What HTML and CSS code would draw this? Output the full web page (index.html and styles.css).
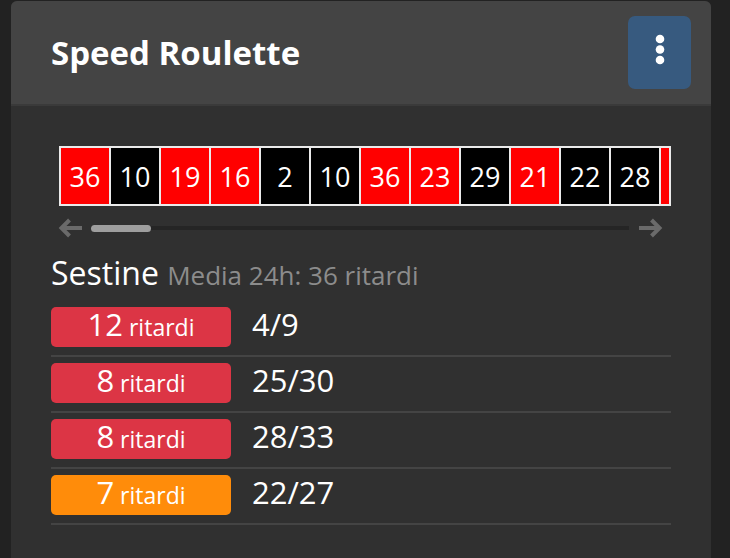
FILE: index.html
```html
<!DOCTYPE html>
<html lang="it">
<head>
<meta charset="UTF-8">
<meta name="viewport" content="width=device-width, initial-scale=1.0">
<title>Speed Roulette</title>
<link rel="stylesheet" href="styles.css">
</head>
<body>
  <div class="card">
    <div class="card-header">
      <h1 class="title">Speed Roulette</h1>
      <button class="menu-btn" type="button">
        <svg width="10" height="32" viewBox="0 0 10 32">
          <circle cx="5" cy="5" r="4.3" fill="#fff"/>
          <circle cx="5" cy="15.5" r="4.3" fill="#fff"/>
          <circle cx="5" cy="26" r="4.3" fill="#fff"/>
        </svg>
      </button>
    </div>

    <div class="card-body">
      <!-- ultime uscite -->
      <div class="spins-frame">
        <div class="spins">
          <div class="spin red">36</div>
          <div class="spin black">10</div>
          <div class="spin red">19</div>
          <div class="spin red">16</div>
          <div class="spin black">2</div>
          <div class="spin black">10</div>
          <div class="spin red">36</div>
          <div class="spin red">23</div>
          <div class="spin black">29</div>
          <div class="spin red">21</div>
          <div class="spin black">22</div>
          <div class="spin black">28</div>
          <div class="spin red"></div>
        </div>
      </div>

      <div class="scroller">
        <svg class="arrow" width="25" height="20" viewBox="0 0 25 20">
          <path d="M24 10H3.5M11.5 2L3.5 10L11.5 18" fill="none" stroke="#6a6a6a" stroke-width="4"/>
        </svg>
        <div class="track"><div class="thumb"></div></div>
        <svg class="arrow" width="25" height="20" viewBox="0 0 25 20">
          <path d="M1 10H21.5M13.5 2L21.5 10L13.5 18" fill="none" stroke="#6a6a6a" stroke-width="4"/>
        </svg>
      </div>

      <h2 class="stats-title">Sestine <small>Media 24h: 36 ritardi</small></h2>

      <div class="stats">
        <div class="row">
          <span class="badge badge-danger"><span class="num">12</span> ritardi</span>
          <span class="value">4/9</span>
        </div>
        <div class="row">
          <span class="badge badge-danger"><span class="num">8</span> ritardi</span>
          <span class="value">25/30</span>
        </div>
        <div class="row">
          <span class="badge badge-danger"><span class="num">8</span> ritardi</span>
          <span class="value">28/33</span>
        </div>
        <div class="row">
          <span class="badge badge-warning"><span class="num">7</span> ritardi</span>
          <span class="value">22/27</span>
        </div>
      </div>
    </div>
  </div>
</body>
</html>
```
FILE: styles.css
```css
body {
  margin: 0;
  background: #222;
  color: #fff;
  font-family: "Open Sans", sans-serif;
}

.card {
  width: 700px;
  min-height: 557px;
  margin: 1px 0 0 11px;
  background: #303030;
  border-radius: 6px 6px 0 0;
  overflow: hidden;
}

.card-header {
  height: 105px;
  box-sizing: border-box;
  display: flex;
  align-items: center;
  justify-content: space-between;
  padding: 0 20px 0 40px;
  background: #444;
  border-bottom: 2px solid #3a3a3a;
}

.title {
  margin: 0;
  font-size: 33px;
  font-weight: 700;
}

.menu-btn {
  width: 63px;
  height: 73px;
  padding: 0;
  display: flex;
  align-items: center;
  justify-content: center;
  background: #375a7f;
  border: none;
  border-radius: 7px;
}

.menu-btn svg {
  margin-bottom: 6px;
}

.card-body {
  padding: 40px 40px 0;
}

.spins-frame {
  width: 608px;
  margin-left: 8px;
  border: 2px solid #eaeaea;
}

.spins {
  display: flex;
  gap: 2px;
  overflow: hidden;
  background: #eaeaea;
}

.spin {
  flex: 0 0 48px;
  height: 56px;
  display: flex;
  align-items: center;
  justify-content: center;
  font-size: 27px;
}

.red {
  background: #f00;
}

.black {
  background: #000;
}

.scroller {
  width: 605px;
  height: 20px;
  margin: 12px 0 0 7px;
  display: flex;
  align-items: center;
}

.arrow {
  flex: none;
}

.track {
  flex: 1;
  height: 7px;
  margin: 0 9px 0 8px;
  background: linear-gradient(#252525, #252525) center / 100% 4px no-repeat;
}

.thumb {
  width: 60px;
  height: 100%;
  background: #9e9e9e;
  border-radius: 4px;
}

.stats-title {
  margin: 17px 0 0;
  font-size: 32px;
  font-weight: 400;
  line-height: 36px;
}

.stats-title small {
  font-size: 26px;
  color: #8c8c8c;
}

.stats {
  margin-top: 8px;
}

.row {
  display: flex;
  align-items: baseline;
  padding: 6px 0 8px;
  border-bottom: 2px solid #444;
}

.badge {
  width: 180px;
  height: 40px;
  box-sizing: border-box;
  border-radius: 5px;
  text-align: center;
  font-size: 23px;
  line-height: 34px;
}

.badge .num {
  font-size: 31px;
}

.badge-danger {
  background: #dc3545;
}

.badge-warning {
  background: #ff8c0a;
}

.value {
  margin-left: 21px;
  font-size: 31px;
  line-height: 34px;
}
```
